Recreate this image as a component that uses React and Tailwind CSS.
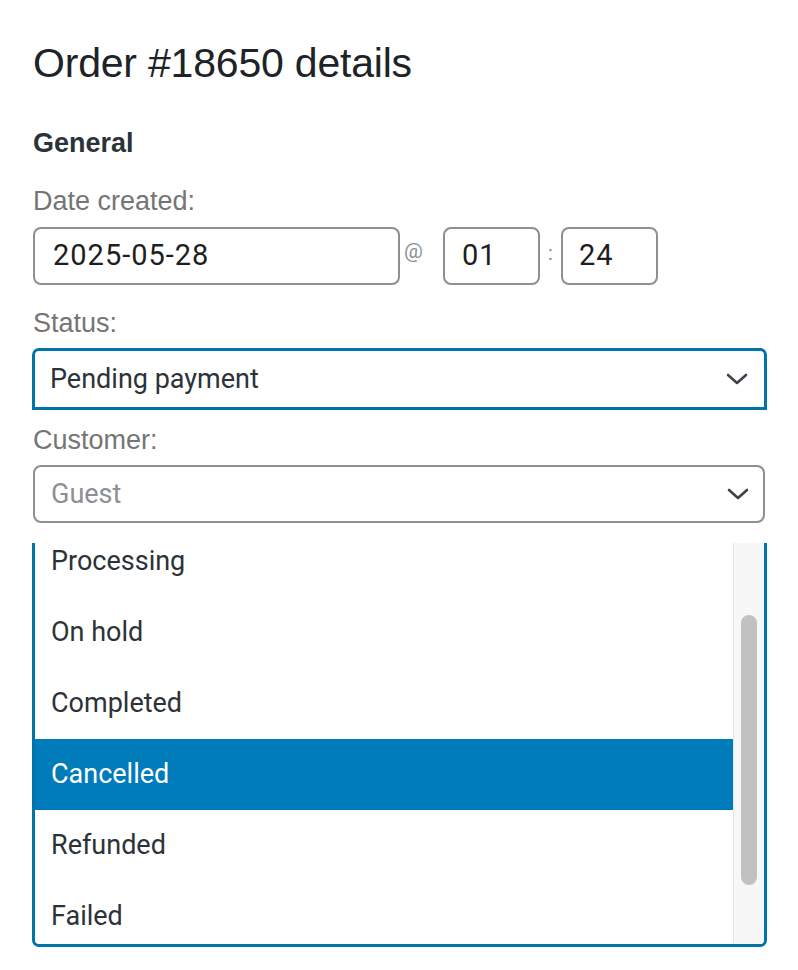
const options = ["Processing", "On hold", "Completed", "Cancelled", "Refunded", "Failed"];

function Chevron() {
  return (
    <svg width="22" height="14" viewBox="0 0 22 14" fill="none" className="text-[#3c434a]">
      <path d="M2 3l9 8 9-8" stroke="currentColor" strokeWidth="2.6" strokeLinecap="round" strokeLinejoin="round" />
    </svg>
  );
}

export default function App() {
  return (
    <div className="w-[798px] h-[970px] bg-white px-[33px] pt-[38px] font-['Liberation_Sans',Arial,sans-serif] text-[#1d2327]">
      <h1 className="text-[41px] leading-[50px] tracking-[-0.2px]">Order #18650 details</h1>

      <h2 className="mt-[39px] text-[27px] leading-[32px] font-bold text-[#2c3338]">General</h2>

      <p className="mt-[26px] text-[27px] leading-[32px] text-[#757575]">Date created:</p>

      <div className="mt-[10px] flex items-center font-['Roboto',sans-serif] text-[29px] text-[#1e1e1e]">
        <div className="w-[367px] h-[58px] border-2 border-[#8c8f94] rounded-[8px] flex items-center pl-[18px] tracking-[1px]">2025-05-28</div>
        <span className="w-[27px] text-center text-[21px] text-[#8c8f94] -mt-[8px]">@</span>
        <div className="ml-[16px] w-[97px] h-[58px] border-2 border-[#8c8f94] rounded-[8px] flex items-center pl-[17px] tracking-[1px]">01</div>
        <span className="w-[21px] text-center text-[20px] text-[#8c8f94] -mt-[6px]">:</span>
        <div className="w-[97px] h-[58px] border-2 border-[#8c8f94] rounded-[8px] flex items-center pl-[16px] tracking-[1px]">24</div>
      </div>

      <p className="mt-[22px] text-[27px] leading-[32px] text-[#757575]">Status:</p>

      <div className="mt-[9px] -ml-[1px] w-[735px] h-[62px] border-[3px] border-[#0073aa] rounded-t-[7px] flex items-center justify-between pl-[15px] pr-[16px] font-['Roboto',sans-serif] text-[27px] text-[#2c3338]">
        <span>Pending payment</span>
        <Chevron />
      </div>

      <p className="mt-[14px] text-[27px] leading-[32px] text-[#757575]">Customer:</p>

      <div className="mt-[9px] w-[732px] h-[58px] border-2 border-[#8c8f94] rounded-[8px] flex items-center justify-between pl-[16px] pr-[14px] font-['Roboto',sans-serif] text-[27px] text-[#8c8f94]">
        <span>Guest</span>
        <Chevron />
      </div>

      <div className="mt-[20px] -ml-[1px] w-[735px] h-[404px] border-x-[3px] border-b-[3px] border-[#0073aa] rounded-b-[7px] flex overflow-hidden font-['Roboto',sans-serif] text-[27px] text-[#2c3338]">
        <ul className="flex-1 -mt-[17px]">
          {options.map((o) => (
            <li
              key={o}
              className={`h-[71px] flex items-center pl-[16px] ${o === "Cancelled" ? "bg-[#007cba] text-white" : ""}`}
            >
              {o}
            </li>
          ))}
        </ul>
        <div className="w-[31px] bg-[#f7f7f7] border-l border-[#e6e6e6] pt-[72px] flex justify-center">
          <div className="w-[16px] h-[270px] rounded-full bg-[#c1c1c1]" />
        </div>
      </div>
    </div>
  );
}
